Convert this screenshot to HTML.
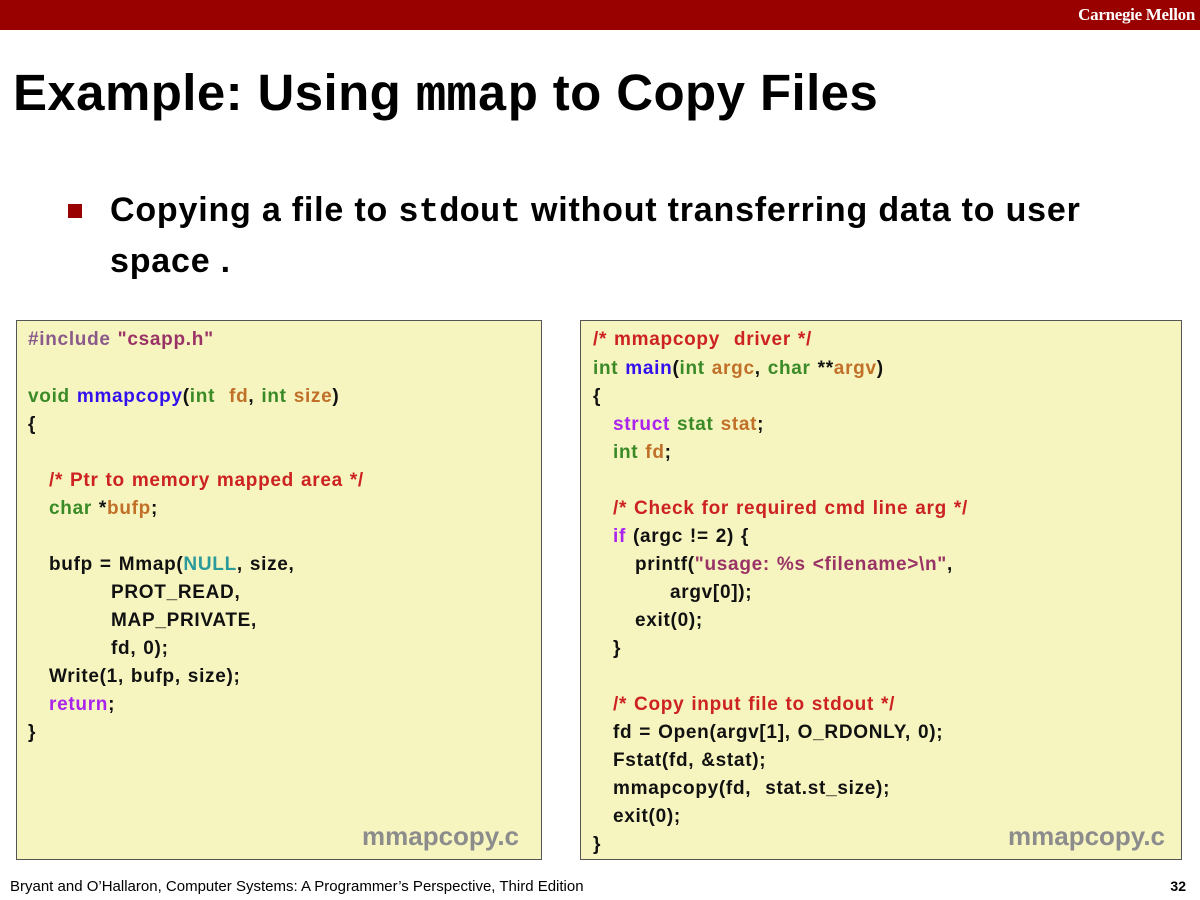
<!DOCTYPE html>
<html><head><meta charset="utf-8"><style>
body{margin:0;width:1200px;height:900px;position:relative;background:#fff;font-family:"Liberation Sans",sans-serif;overflow:hidden}
.bar{position:absolute;left:0;top:0;width:1200px;height:30px;background:#990000}
.cmu{position:absolute;right:5px;top:5px;color:#fff;font:bold 17px "Liberation Serif",serif;letter-spacing:-0.3px}
h1{position:absolute;left:13px;top:63px;margin:0;font-size:51px;font-weight:bold;letter-spacing:0.4px;white-space:nowrap}
h1 code,.b code{font-family:"Liberation Mono",monospace;font-weight:bold;letter-spacing:0}
.sq{position:absolute;left:68px;top:204px;width:14px;height:14px;background:#990000}
.b{position:absolute;left:110px;top:186px;font-size:34px;font-weight:bold;line-height:48px;letter-spacing:0.8px;width:1000px}
.box{position:absolute;top:320px;height:540px;background:#f7f5bf;border:1px solid #555;box-sizing:border-box}
.l{position:absolute;font-size:19px;font-weight:bold;white-space:pre;line-height:22px;color:#111;letter-spacing:0.7px;word-spacing:1px}
.g{color:#3a8a28}.bl{color:#3311ee}.o{color:#c07028}.r{color:#cc2222}.p{color:#aa22ee}.pu{color:#8a5a8a}.m{color:#993366}.t{color:#2a9a9a}
.fn{position:absolute;font-size:26px;font-weight:bold;color:#8c8c8c;letter-spacing:0}
.foot{position:absolute;left:10px;top:878px;font-size:15px;letter-spacing:0}
.pg{position:absolute;right:14px;top:878px;font-size:14px;font-weight:bold}
</style></head><body>
<div class="bar"><div class="cmu">Carnegie Mellon</div></div>
<h1>Example: Using <code>mmap</code> to Copy Files</h1>
<div class="sq"></div>
<div class="b">Copying a file to <code>stdout</code> without transferring data to user space .</div>
<div class="box" style="left:16px;width:526px"></div>
<div class="box" style="left:580px;width:602px"></div>
<div class="l" style="left:28px;top:329px"><span class="pu">#include</span> <span class="m">"csapp.h"</span></div>
<div class="l" style="left:28px;top:386px"><span class="g">void</span> <span class="bl">mmapcopy</span>(<span class="g">int</span>  <span class="o">fd</span>, <span class="g">int</span> <span class="o">size</span>)</div>
<div class="l" style="left:28px;top:414px">{</div>
<div class="l" style="left:49px;top:470px"><span class="r">/* Ptr to memory mapped area */</span></div>
<div class="l" style="left:49px;top:498px"><span class="g">char</span> *<span class="o">bufp</span>;</div>
<div class="l" style="left:49px;top:554px">bufp = Mmap(<span class="t">NULL</span>, size,</div>
<div class="l" style="left:111px;top:582px">PROT_READ,</div>
<div class="l" style="left:111px;top:610px">MAP_PRIVATE,</div>
<div class="l" style="left:111px;top:638px">fd, 0);</div>
<div class="l" style="left:49px;top:666px">Write(1, bufp, size);</div>
<div class="l" style="left:49px;top:694px"><span class="p">return</span>;</div>
<div class="l" style="left:28px;top:722px">}</div>
<div class="fn" style="left:362px;top:821px">mmapcopy.c</div>

<div class="l" style="left:593px;top:329px"><span class="r">/* mmapcopy  driver */</span></div>
<div class="l" style="left:593px;top:358px"><span class="g">int</span> <span class="bl">main</span>(<span class="g">int</span> <span class="o">argc</span>, <span class="g">char</span> **<span class="o">argv</span>)</div>
<div class="l" style="left:593px;top:386px">{</div>
<div class="l" style="left:613px;top:414px"><span class="p">struct</span> <span class="g">stat</span> <span class="o">stat</span>;</div>
<div class="l" style="left:613px;top:442px"><span class="g">int</span> <span class="o">fd</span>;</div>
<div class="l" style="left:613px;top:498px"><span class="r">/* Check for required cmd line arg */</span></div>
<div class="l" style="left:613px;top:526px"><span class="p">if</span> (argc != 2) {</div>
<div class="l" style="left:635px;top:554px">printf(<span class="m">"usage: %s &lt;filename&gt;\n"</span>,</div>
<div class="l" style="left:670px;top:582px">argv[0]);</div>
<div class="l" style="left:635px;top:610px">exit(0);</div>
<div class="l" style="left:613px;top:638px">}</div>
<div class="l" style="left:613px;top:694px"><span class="r">/* Copy input file to stdout */</span></div>
<div class="l" style="left:613px;top:722px">fd = Open(argv[1], O_RDONLY, 0);</div>
<div class="l" style="left:613px;top:750px">Fstat(fd, &amp;stat);</div>
<div class="l" style="left:613px;top:778px">mmapcopy(fd,  stat.st_size);</div>
<div class="l" style="left:613px;top:806px">exit(0);</div>
<div class="l" style="left:593px;top:834px">}</div>
<div class="fn" style="left:1008px;top:821px">mmapcopy.c</div>

<div class="foot">Bryant and O’Hallaron, Computer Systems: A Programmer’s Perspective, Third Edition</div>
<div class="pg">32</div>
</body></html>
